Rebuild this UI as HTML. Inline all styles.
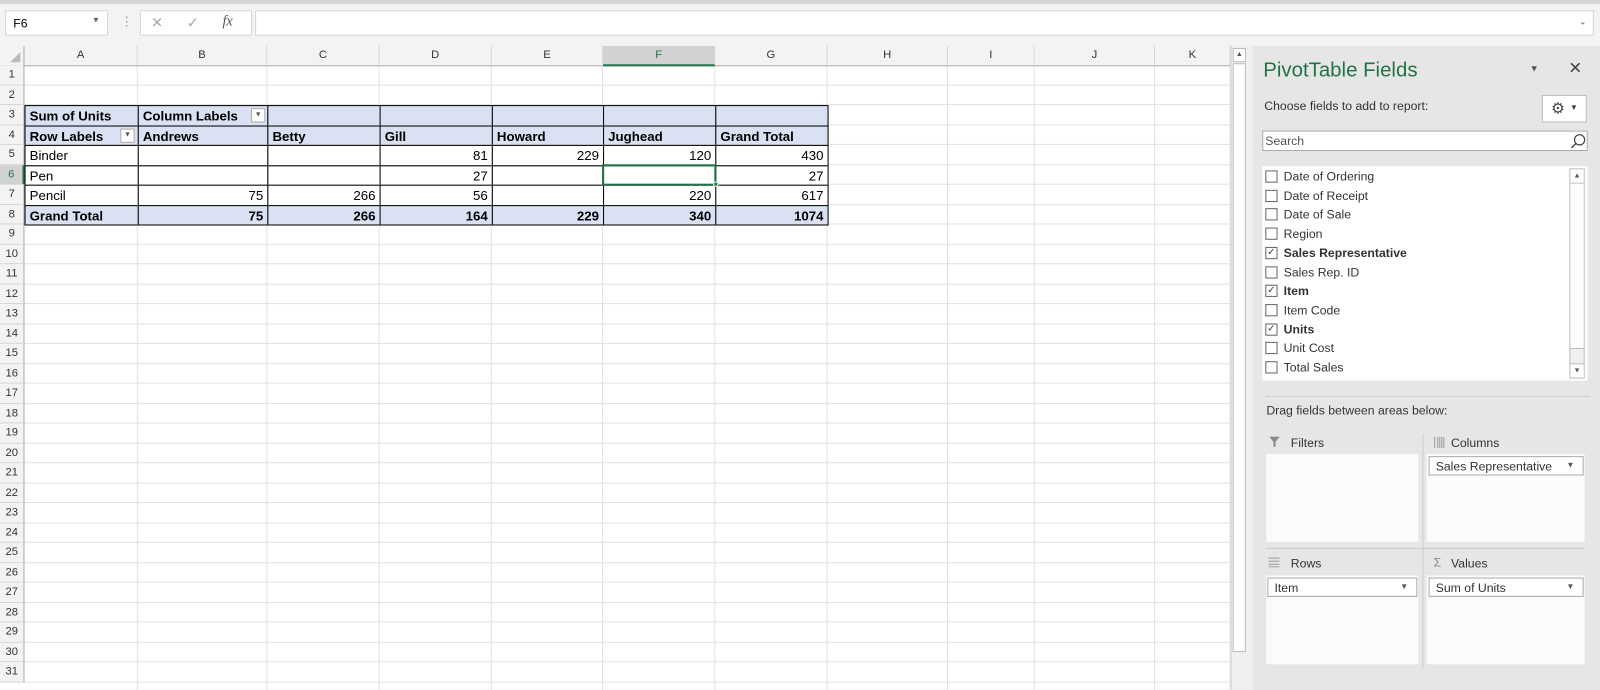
<!DOCTYPE html>
<html><head><meta charset="utf-8"><style>
*{box-sizing:border-box;margin:0;padding:0}
body{width:1600px;height:676px;overflow:hidden;background:#e6e6e6;font-family:"Liberation Sans",sans-serif;position:relative}
#w{position:absolute;left:0;top:0;width:1568px;height:663px;transform:scale(1.0204);transform-origin:0 0;background:#e6e6e6}
.a{position:absolute}
.top{left:0;top:0;width:1568px;height:45px;background:#f3f3f3;border-top:4px solid #d6d6d6}
.box{background:#fff;border:1px solid #d4d4d4}
.ch{font-size:11px;color:#333;text-align:center;line-height:19px;border-right:1px solid #d4d4d4;border-bottom:1px solid #ababab;background:#f3f3f3;top:45px;height:20px}
.rh{font-size:11px;color:#333;left:0;width:24px;text-align:center;background:#f3f3f3;border-bottom:1px solid #d4d4d4;border-right:1px solid #ababab}
.c{font-size:13px;white-space:nowrap;overflow:hidden;padding:0 4px;color:#000;line-height:19px}
.b{font-weight:bold}
.r{text-align:right}
.fl{font-size:12px;color:#333;left:1258px}
.cb{left:1240px;width:12px;height:12px;border:1px solid #666;background:#fff;font-size:10px;line-height:10px;text-align:center;color:#444}
</style></head><body><div id="w">
<div class="a top"></div>
<div class="a box" style="left:5px;top:10px;width:101px;height:25px;font-size:12px;padding:5px 7px">F6<span style="position:absolute;right:7px;top:4px;font-size:8px;color:#666">▼</span></div>
<div class="a" style="left:118px;top:14px;color:#999;font-size:12px">⋮</div>
<div class="a box" style="left:137px;top:10px;width:110px;height:25px;color:#aaa;font-size:14px"><span class="a" style="left:10px;top:3px">✕</span><span class="a" style="left:45px;top:3px">✓</span><span class="a" style="left:80px;top:3px;font-style:italic;font-family:'Liberation Serif';color:#555">fx</span></div>
<div class="a box" style="left:250px;top:10px;width:1312px;height:25px"><span class="a" style="right:6px;top:5px;font-size:9px;color:#555">⌄</span></div>
<div id="grid"></div>
<div class="a" style="left:1206px;top:45px;width:17px;height:631px;background:#f0f0f0;border-left:1px solid #d4d4d4"></div>
<div class="a" style="left:1208px;top:47px;width:13px;height:14px;background:#fff;border:1px solid #bbb;font-size:7px;text-align:center;line-height:12px;color:#555">▲</div>
<div class="a" style="left:1208px;top:62px;width:13px;height:577px;background:#fff;border:1px solid #bbb"></div>
<div class="a" style="left:1223px;top:45px;width:5px;height:631px;background:#f0f0f0"></div>
<div class="a" style="left:1238px;top:58px;font-size:20px;color:#217346">PivotTable Fields</div>
<div class="a" style="left:1499px;top:62px;font-size:9px;color:#555">▼</div>
<div class="a" style="left:1537px;top:57px;font-size:16px;color:#444">✕</div>
<div class="a" style="left:1239px;top:97px;font-size:12px;color:#333">Choose fields to add to report:</div>
<div class="a box" style="left:1511px;top:93px;width:44px;height:27px;border-color:#bbb;font-size:15px;color:#444;padding:3px 0 0 8px">⚙<span style="font-size:8px;margin-left:5px;vertical-align:3px">▼</span></div>
<div class="a box" style="left:1237px;top:128px;width:319px;height:20px;border-color:#aaa;font-size:12px;color:#555;padding:2px 2px">Search</div>
<svg class="a" style="left:1538px;top:130px" width="17" height="17"><circle cx="10" cy="7" r="5" fill="none" stroke="#444" stroke-width="1.2"/><path d="M6.5 10.5L2 15" stroke="#444" stroke-width="1.4"/></svg>
<div class="a" style="left:1237px;top:163px;width:319px;height:210px;background:#fff"></div>
<div class="a" style="left:1538px;top:165px;width:15px;height:206px;background:#f0f0f0;border:1px solid #bbb"></div>
<div class="a" style="left:1539px;top:166px;width:13px;height:14px;background:#fff;border-bottom:1px solid #bbb;font-size:7px;text-align:center;line-height:13px;color:#555">▲</div>
<div class="a" style="left:1539px;top:180px;width:13px;height:162px;background:#fff;border-bottom:1px solid #bbb"></div>
<div class="a" style="left:1539px;top:356px;width:13px;height:14px;background:#fff;border-top:1px solid #bbb;font-size:7px;text-align:center;line-height:13px;color:#555">▼</div>
<div id="fields"></div>
<div class="a" style="left:1240px;top:388px;width:318px;border-top:1px dotted #bbb"></div>
<div class="a" style="left:1241px;top:395px;font-size:12px;color:#333">Drag fields between areas below:</div>
<svg class="a" style="left:1243px;top:427px" width="12" height="12"><path d="M1 1H11L7 6V11H5V6Z" fill="#888"/></svg><div class="a" style="left:1265px;top:427px;font-size:12px;color:#333">Filters</div>
<svg class="a" style="left:1405px;top:428px" width="12" height="11"><path d="M1 0V11M4 0V11M6 0V11M8 0V11M10 0V11" stroke="#999" stroke-width="1"/></svg><div class="a" style="left:1422px;top:427px;font-size:12px;color:#333">Columns</div>
<svg class="a" style="left:1243px;top:546px" width="12" height="10"><path d="M0 1H11M0 4H11M0 7H11M0 9.5H11" stroke="#999" stroke-width="1"/></svg><div class="a" style="left:1265px;top:545px;font-size:12px;color:#333">Rows</div>
<div class="a" style="left:1405px;top:544px;font-size:12px;color:#888">Σ</div><div class="a" style="left:1422px;top:545px;font-size:12px;color:#333">Values</div>
<div class="a" style="left:1394px;top:425px;width:1px;height:230px;background:#ccc"></div>
<div class="a" style="left:1241px;top:537px;width:312px;height:1px;background:#ccc"></div>
<div class="a" style="left:1241px;top:445px;width:149px;height:86px;background:#fbfbfb"></div>
<div class="a" style="left:1398px;top:445px;width:155px;height:86px;background:#fbfbfb"></div>
<div class="a" style="left:1241px;top:564px;width:149px;height:87px;background:#fbfbfb"></div>
<div class="a" style="left:1398px;top:564px;width:155px;height:87px;background:#fbfbfb"></div>
<div class="a box" style="left:1400px;top:447px;width:152px;height:19px;border-color:#aaa;font-size:12px;color:#333;padding:2px 6px">Sales Representative<span style="position:absolute;right:8px;top:3px;font-size:8px;color:#555">▼</span></div>
<div class="a box" style="left:1242px;top:566px;width:147px;height:19px;border-color:#aaa;font-size:12px;color:#333;padding:2px 6px">Item<span style="position:absolute;right:8px;top:3px;font-size:8px;color:#555">▼</span></div>
<div class="a box" style="left:1400px;top:566px;width:152px;height:19px;border-color:#aaa;font-size:12px;color:#333;padding:2px 6px">Sum of Units<span style="position:absolute;right:8px;top:3px;font-size:8px;color:#555">▼</span></div>
</div>
<script>
var X=[0,24,135,262,372,482,591,701,811,929,1014,1132,1206],L="ABCDEFGHIJK",H=19.5,T=64;
var g='<div class="a" style="left:0;top:45px;width:1206px;height:631px;background:#fff"></div>';
g+='<div class="a" style="left:0;top:45px;width:24px;height:20px;background:#f3f3f3;border-right:1px solid #ababab;border-bottom:1px solid #ababab"><div style="position:absolute;right:3px;bottom:3px;width:0;height:0;border-left:10px solid transparent;border-bottom:10px solid #bbb"></div></div>';
for(var i=0;i<11;i++){var s=i==5?'background:#d2d2d2;color:#217346;border-bottom:2px solid #217346;':'';g+='<div class="a ch" style="left:'+X[i+1]+'px;width:'+(X[i+2]-X[i+1])+'px;'+s+'">'+L[i]+'</div>';
g+='<div class="a" style="left:'+(X[i+2]-1)+'px;top:65px;width:1px;height:611px;background:#e1e1e1"></div>';}
for(var r=1;r<=31;r++){var y=T+(r-1)*H;var s=r==6?'background:#d2d2d2;color:#217346;border-right:2px solid #217346;':'';
g+='<div class="a rh" style="top:'+y+'px;height:'+H+'px;line-height:'+H+'px;'+s+'">'+r+'</div>';
g+='<div class="a" style="left:24px;top:'+(y+H-1)+'px;width:1182px;height:1px;background:#e1e1e1"></div>';}
var rows=[["Sum of Units","Column Labels","","","","",""],["Row Labels","Andrews","Betty","Gill","Howard","Jughead","Grand Total"],["Binder","","","81","229","120","430"],["Pen","","","27","","","27"],["Pencil","75","266","56","","220","617"],["Grand Total","75","266","164","229","340","1074"]];
for(var k=0;k<6;k++){var y=T+(k+2)*H;var bold=k<2||k==5,bg=bold?'#d9e1f2':'#fff';
for(var c=0;c<7;c++){var x=X[c+1],w=X[c+2]-X[c+1];var right=(k>=2&&c>0);
g+='<div class="a c'+(bold?' b':'')+(right?' r':'')+'" style="left:'+x+'px;top:'+y+'px;width:'+(w+1)+'px;height:'+(H+1)+'px;background:'+bg+';border:1px solid #000">'+rows[k][c]+'</div>';}}
[[118,4],[246,3]].forEach(function(p){var y=T+(p[1]-1)*H+3;g+='<div class="a" style="left:'+p[0]+'px;top:'+y+'px;width:14px;height:14px;background:#fff;border:1px solid #aaa;font-size:7px;text-align:center;line-height:12px;color:#555">▼</div>';});
g+='<div class="a" style="left:590px;top:'+(T+5*H-1)+'px;width:112px;height:'+(H+2)+'px;border:2px solid #217346"></div>';
g+='<div class="a" style="left:699px;top:'+(T+6*H-3)+'px;width:5px;height:5px;background:#217346;border:1px solid #fff"></div>';
document.getElementById('grid').innerHTML=g;
var F=[["Date of Ordering",0],["Date of Receipt",0],["Date of Sale",0],["Region",0],["Sales Representative",1],["Sales Rep. ID",0],["Item",1],["Item Code",0],["Units",1],["Unit Cost",0],["Total Sales",0]],f='';
F.forEach(function(a,i){var y=166+i*18.7;f+='<div class="a cb" style="top:'+(y+1)+'px">'+(a[1]?'✓':'')+'</div><div class="a fl" style="top:'+y+'px;'+(a[1]?'font-weight:bold':'')+'">'+a[0]+'</div>';});
document.getElementById('fields').innerHTML=f;
</script>
</body></html>
